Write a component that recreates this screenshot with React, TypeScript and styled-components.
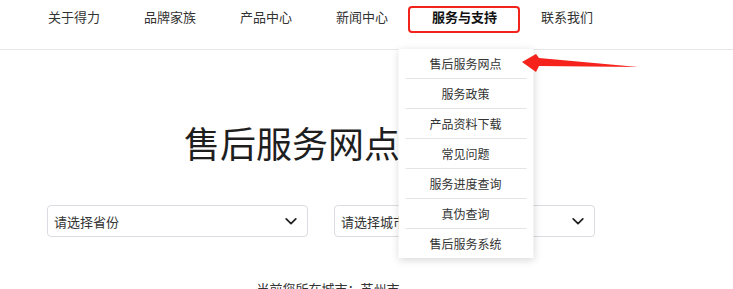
import React from 'react'
import styled, { createGlobalStyle } from 'styled-components'

const GlobalStyle = createGlobalStyle`
  html, body {
    margin: 0;
    padding: 0;
    background: #fff;
  }
  body {
    font-family: "Noto Sans CJK SC", "Liberation Sans", sans-serif;
    color: #333;
    overflow: hidden;
  }
`

const Page = styled.div`
  position: relative;
  width: 733px;
  height: 289px;
  overflow: hidden;
`

const Header = styled.header`
  display: flex;
  gap: 44px;
  height: 42px;
  padding: 7px 0 0 48px;
  border-bottom: 1px solid #e6e6e6;
`

const NavItem = styled.div<{ $active?: boolean }>`
  position: relative;
  height: 20px;
  line-height: 20px;
  font-size: 13px;
  color: ${p => (p.$active ? '#111' : '#333')};
  font-weight: ${p => (p.$active ? 700 : 400)};
  white-space: nowrap;
  &::before {
    content: ${p => (p.$active ? "''" : 'none')};
    position: absolute;
    top: -1px;
    bottom: -6px;
    left: -24px;
    right: -23px;
    border: 2px solid #f2231c;
    border-radius: 4px;
  }
`

const Dropdown = styled.ul`
  position: absolute;
  top: 42px;
  left: 50%;
  transform: translateX(-50%);
  width: 135px;
  margin: 0 0 0 1px;
  padding: 0 7px;
  box-sizing: border-box;
  list-style: none;
  background: #fff;
  box-shadow: 0 2px 8px rgba(0, 0, 0, 0.16);
  z-index: 5;
`

const DropItem = styled.li`
  height: 29px;
  line-height: 29px;
  text-align: center;
  font-size: 12px;
  font-weight: 400;
  color: #333;
  border-bottom: 1px solid #e4e4e4;
  &:last-child {
    border-bottom: none;
  }
`

const Main = styled.main`
  width: 562px;
  margin-left: 47px;
  padding-top: 70px;
`

const Title = styled.h1`
  margin: 0;
  height: 44px;
  line-height: 44px;
  font-size: 36px;
  font-weight: 400;
  color: #1e1e1e;
  text-align: center;
  white-space: nowrap;
`

const Filters = styled.div`
  display: grid;
  grid-template-columns: 261px 261px;
  gap: 26px;
  margin-top: 41px;
`

const Select = styled.div`
  display: flex;
  align-items: center;
  justify-content: space-between;
  height: 32px;
  padding: 0 9px 0 6px;
  box-sizing: border-box;
  border: 1px solid #d9dce1;
  border-radius: 4px;
  font-size: 13px;
  color: #333;
  svg {
    flex: none;
  }
`

const CityNote = styled.p`
  margin: 42px 0 0;
  line-height: 20px;
  font-size: 13px;
  color: #333;
  text-align: center;
`

const Arrow = styled.svg`
  position: absolute;
  left: 520px;
  top: 45px;
  z-index: 6;
`

const Chevron = () => (
  <svg width="14" height="14" viewBox="0 0 16 16" fill="none">
    <path d="M2.5 5.5l5.5 5.5 5.5-5.5" stroke="#222" strokeWidth="2" strokeLinecap="round" strokeLinejoin="round" />
  </svg>
)

const navs = ['关于得力', '品牌家族', '产品中心', '新闻中心', '服务与支持', '联系我们']
const menu = ['售后服务网点', '服务政策', '产品资料下载', '常见问题', '服务进度查询', '真伪查询', '售后服务系统']

export default function App() {
  return (
    <Page>
      <GlobalStyle />
      <Header>
        {navs.map(n => (
          <NavItem key={n} $active={n === '服务与支持'}>
            {n}
            {n === '服务与支持' && (
              <Dropdown>
                {menu.map(m => (
                  <DropItem key={m}>{m}</DropItem>
                ))}
              </Dropdown>
            )}
          </NavItem>
        ))}
      </Header>
      <Main>
        <Title>售后服务网点查询</Title>
        <Filters>
          <Select>
            <span>请选择省份</span>
            <Chevron />
          </Select>
          <Select>
            <span>请选择城市</span>
            <Chevron />
          </Select>
        </Filters>
        <CityNote>当前您所在城市：苏州市</CityNote>
      </Main>
      <Arrow width="122" height="32" viewBox="0 0 122 32">
        <polygon points="2,17 16,9 19,13 118,22 19,21 16,27" fill="#f5231b" />
      </Arrow>
    </Page>
  )
}
